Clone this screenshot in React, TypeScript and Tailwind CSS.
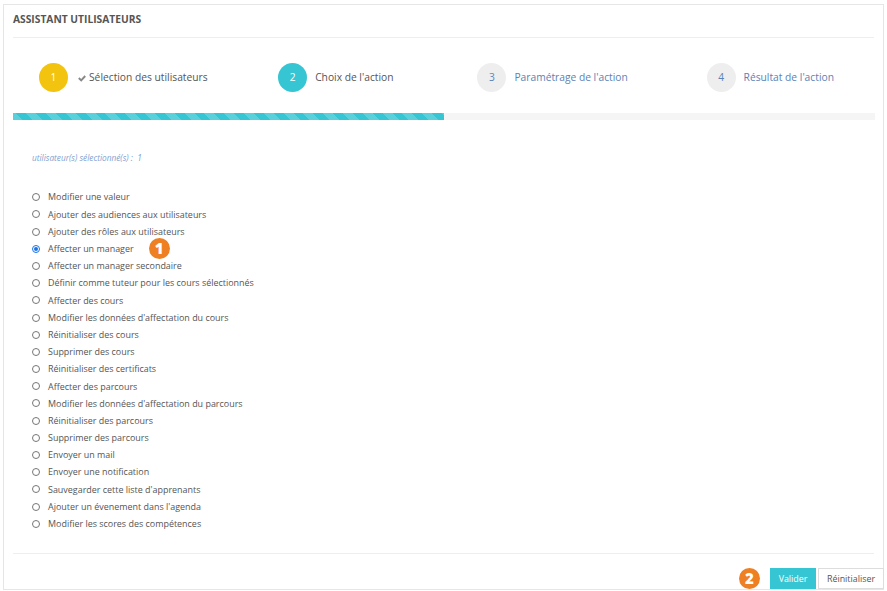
import React from 'react';

const actions = [
    'Modifier une valeur',
    'Ajouter des audiences aux utilisateurs',
    'Ajouter des rôles aux utilisateurs',
    'Affecter un manager',
    'Affecter un manager secondaire',
    'Définir comme tuteur pour les cours sélectionnés',
    'Affecter des cours',
    "Modifier les données d'affectation du cours",
    'Réinitialiser des cours',
    'Supprimer des cours',
    'Réinitialiser des certificats',
    'Affecter des parcours',
    "Modifier les données d'affectation du parcours",
    'Réinitialiser des parcours',
    'Supprimer des parcours',
    'Envoyer un mail',
    'Envoyer une notification',
    "Sauvegarder cette liste d'apprenants",
    "Ajouter un évenement dans l'agenda",
    'Modifier les scores des compétences',
];

const Badge: React.FC<{ n: number }> = ({ n }) => (
    <span className='flex h-[21px] w-[21px] items-center justify-center rounded-full bg-[#ee7f22] text-[15px] font-extrabold leading-none text-white'>{n}</span>
);

const Step: React.FC<{ n: number, label: string, width: string, circle: string, text: string, check?: boolean }> = ({ n, label, width, circle, text, check }) => (
    <div className={`flex items-center ${width}`}>
        <span className={`flex h-[29px] w-[29px] items-center justify-center rounded-full text-[10.25px] ${circle}`}>{n}</span>
        <span className={`flex items-center text-[10.25px] ${check ? 'ml-[10px]' : 'ml-[8px]'} ${text}`}>
            {check && (
                <svg viewBox='0 0 10 10' className='mr-[3px] h-[8px] w-[8px] text-[#888]' fill='none' stroke='currentColor' strokeWidth='2.4'>
                    <path d='M1 5 L4 8 L9 2.5' />
                </svg>
            )}
            {label}
        </span>
    </div>
);

export default function App() {
    return (
        <div className="h-[591px] w-[887px] overflow-hidden bg-white pl-[3px] pt-[4px] font-['Open_Sans',sans-serif] text-[#555]">
            <div className='flex h-[586px] w-[881px] flex-col border border-[#e6e6e6] px-[9px]'>
                {/* Title */}
                <div className='flex h-[33px] shrink-0 items-center border-b border-[#eeeeee] pb-[3px]'>
                    <h3 className='text-[10.25px] font-bold uppercase text-[#555]'>Assistant utilisateurs</h3>
                </div>

                {/* Steps */}
                <div className='mt-[25px] flex pl-[26px]'>
                    <Step n={1} label='Sélection des utilisateurs' width='w-[240px]' circle='bg-[#f2c30f] text-white' text='text-[#555]' check />
                    <Step n={2} label="Choix de l'action" width='w-[200px]' circle='bg-[#36c6d3] text-white' text='text-[#555]' />
                    <Step n={3} label="Paramétrage de l'action" width='w-[230px]' circle='bg-[#eeeeee] text-[#5b82b5]' text='text-[#5b82b5]' />
                    <Step n={4} label="Résultat de l'action" width='w-[168px]' circle='bg-[#eeeeee] text-[#5b82b5]' text='text-[#5b82b5]' />
                </div>

                {/* Progress */}
                <div className='mt-[21px] h-[7px] w-[862px] bg-[#f5f5f5]'>
                    <div className='h-full w-[431px] bg-[#36c6d3] bg-[repeating-linear-gradient(45deg,rgba(255,255,255,0.18)_0_7px,transparent_7px_14px)]'></div>
                </div>

                {/* Selected users */}
                <p className='ml-[19px] mt-[32px] text-[8.3px] italic leading-[12px] text-[#7f9fd1]'>
                    utilisateur(s) sélectionné(s) :&nbsp;&nbsp;1
                </p>

                {/* Actions */}
                <div className='ml-[19px] mt-[24.6px] flex flex-col'>
                    {actions.map((a, i) => (
                        <div key={a} className='flex h-[17.2px] items-center'>
                            {i === 3 ? (
                                <span className='flex h-[8px] w-[8px] items-center justify-center rounded-full border border-[#1a73e8] bg-white'>
                                    <span className='h-[4px] w-[4px] rounded-full bg-[#1a73e8]'></span>
                                </span>
                            ) : (
                                <span className='h-[8px] w-[8px] rounded-full border border-[#767676] bg-white'></span>
                            )}
                            <span className='ml-[8px] text-[8.95px] text-[#555]'>{a}</span>
                            {i === 3 && <span className='ml-[15px]'><Badge n={1} /></span>}
                        </div>
                    ))}
                </div>

                {/* Footer */}
                <div className='mt-[20.4px] flex h-[36px] shrink-0 items-end justify-end border-t border-[#eeeeee]'>
                    <div className='-mr-[10px] flex items-center'>
                        <Badge n={2} />
                        <button className='ml-[10px] h-[21px] w-[46px] bg-[#36c6d3] text-[8.9px] text-white'>Valider</button>
                        <button className='ml-[2px] h-[21px] w-[66px] border border-[#dddddd] bg-white text-[8.9px] text-[#555]'>Réinitialiser</button>
                    </div>
                </div>
            </div>
        </div>
    );
}
